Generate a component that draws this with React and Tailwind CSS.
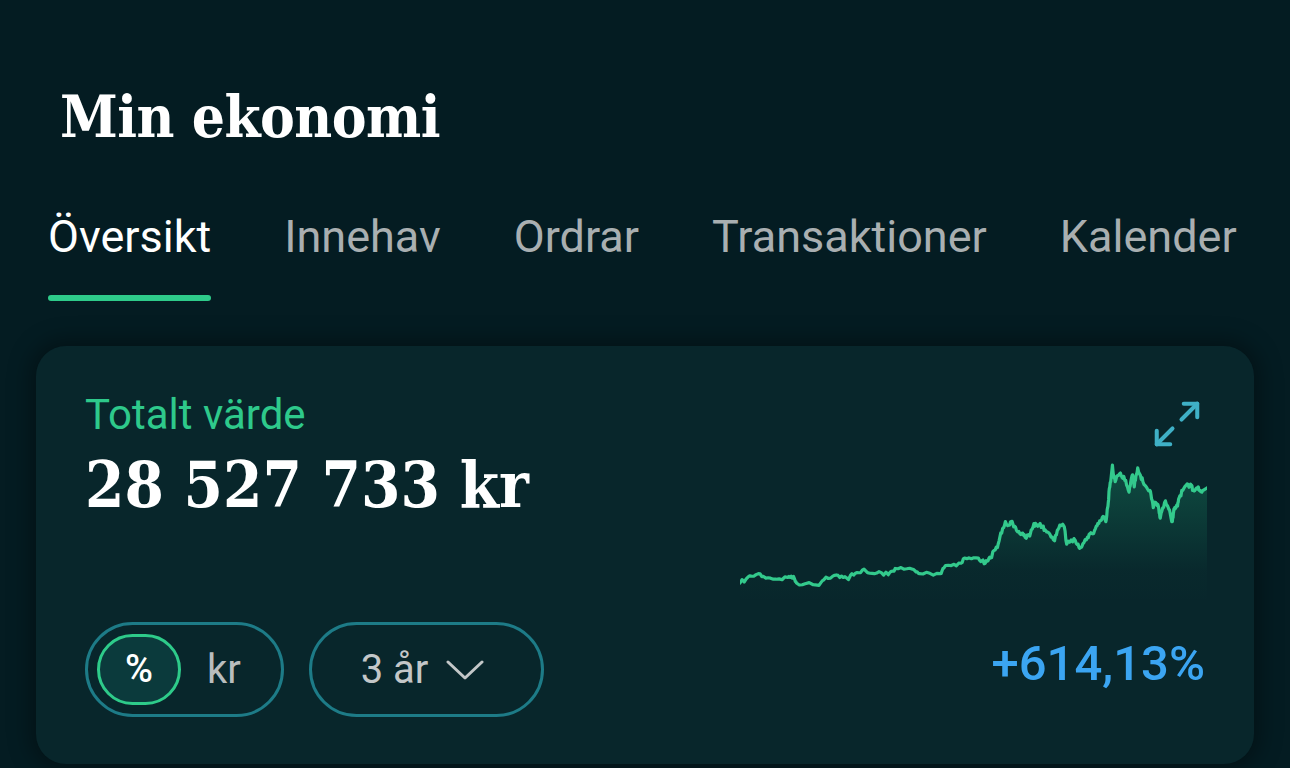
import React from "react";

const KEY = [
  [62, 572], [80, 560], [95, 552], [115, 545], [130, 553], [150, 558], [175, 560], [200, 556], [210, 552], [220, 562], [225, 572], [250, 574], [285, 578], [300, 565], [310, 555], [330, 552], [345, 550], [360, 556], [375, 562], [385, 545], [400, 542], [415, 535], [430, 542], [450, 545], [470, 542], [490, 548], [500, 538], [510, 530], [535, 532], [560, 532], [570, 540], [580, 545], [610, 544], [640, 545], [648, 530], [655, 522], [680, 518], [700, 515], [710, 500], [730, 502], [750, 500], [760, 508], [770, 515], [778, 508], [785, 500], [795, 478], [805, 470], [812, 440], [820, 415], [828, 395], [838, 405], [845, 395], [852, 410], [860, 420], [870, 430], [878, 428], [885, 440], [895, 435], [900, 430], [908, 410], [915, 400], [925, 405], [935, 408], [942, 418], [950, 425], [960, 440], [970, 450], [978, 420], [985, 405], [998, 410], [1005, 460], [1018, 448], [1030, 450], [1038, 460], [1045, 470], [1055, 455], [1065, 440], [1072, 430], [1080, 430], [1088, 415], [1095, 400], [1103, 392], [1110, 380], [1118, 395], [1122, 360], [1125, 340], [1128, 300], [1132, 280], [1137, 232], [1141, 265], [1145, 280], [1152, 262], [1160, 255], [1165, 268], [1170, 265], [1178, 290], [1185, 310], [1190, 280], [1195, 260], [1200, 295], [1205, 262], [1210, 240], [1218, 262], [1225, 280], [1235, 295], [1245, 305], [1250, 330], [1255, 355], [1262, 340], [1268, 345], [1272, 370], [1275, 385], [1282, 355], [1290, 335], [1295, 348], [1300, 360], [1305, 378], [1310, 395], [1313, 370], [1315, 360], [1320, 355], [1325, 350], [1328, 330], [1332, 320], [1340, 305], [1350, 290], [1358, 296], [1365, 290], [1370, 305], [1378, 300], [1385, 295], [1390, 305], [1395, 310], [1402, 303], [1410, 298]
];

function makePath() {
  let seed = 7;
  const rnd = () => {
    seed = (seed * 16807) % 2147483647;
    return seed / 2147483647;
  };
  const pts = [];
  for (let i = 0; i < KEY.length - 1; i++) {
    const [x0, y0] = KEY[i];
    const [x1, y1] = KEY[i + 1];
    const n = 3;
    for (let k = 0; k < n; k++) {
      const t = k / n;
      const jitter = k === 0 ? 0 : (rnd() - 0.5) * 12;
      pts.push([x0 + (x1 - x0) * t, y0 + (y1 - y0) * t + jitter]);
    }
  }
  pts.push(KEY[KEY.length - 1]);
  const line = pts.map((p, i) => `${i ? "L" : "M"}${p[0].toFixed(1)},${p[1].toFixed(1)}`).join(" ");
  const area = `${line} L1410,640 L62,640 Z`;
  return { line, area };
}

const { line, area } = makePath();

function Chart() {
  return (
    <svg width="467" height="136" viewBox="62 226 1348 392" preserveAspectRatio="none" className="block">
      <defs>
        <linearGradient id="g" x1="0" y1="0" x2="0" y2="1">
          <stop offset="0" stopColor="#1fa877" stopOpacity="0.3" />
          <stop offset="0.75" stopColor="#1fa877" stopOpacity="0.02" />
          <stop offset="1" stopColor="#1fa877" stopOpacity="0" />
        </linearGradient>
      </defs>
      <path d={area} fill="url(#g)" />
      <path d={line} fill="none" stroke="#33c98c" strokeWidth="3.2" strokeLinejoin="round" strokeLinecap="round" vectorEffect="non-scaling-stroke" />
    </svg>
  );
}

function ExpandIcon() {
  return (
    <svg width="54" height="54" viewBox="0 0 24 24" fill="none" stroke="#3fb0c6" strokeWidth="1.8" strokeLinecap="round" strokeLinejoin="round">
      <polyline points="15 3 21 3 21 9" />
      <polyline points="9 21 3 21 3 15" />
      <line x1="21" y1="3" x2="14" y2="10" />
      <line x1="3" y1="21" x2="10" y2="14" />
    </svg>
  );
}

const tabs = ["Översikt", "Innehav", "Ordrar", "Transaktioner", "Kalender"];

export default function App() {
  const roboto = { fontFamily: "Roboto, 'Noto Sans', sans-serif" };
  const slab = { fontFamily: "'DejaVu Serif Condensed', 'DejaVu Serif', serif", fontStretch: "condensed" };
  return (
    <div className="w-[1290px] h-[768px] overflow-hidden bg-[#041c22] flex flex-col" style={roboto}>
      <h1 className="pl-[60px] pt-[85px] text-[58px] leading-[64px] font-bold text-white tracking-[-0.5px]" style={slab}>
        Min ekonomi
      </h1>
      <div className="flex gap-[73px] pl-[48px] mt-[62px]">
        {tabs.map((t, i) => (
          <div key={t} className="flex flex-col">
            <span className={`text-[45px] leading-[52px] ${i === 0 ? "text-white" : "text-[#a9afb1]"}`}>{t}</span>
            <div className={`mt-[32px] h-[6px] rounded-full ${i === 0 ? "bg-[#2ecb8a]" : "bg-transparent"}`} />
          </div>
        ))}
      </div>
      <div className="mx-[36px] mt-[45px] h-[418px] rounded-[30px] bg-[#08262b] shadow-[0_0_22px_6px_rgba(0,0,0,0.35)] pl-[49px] pr-[47px] pt-[44px] pb-[47px] flex flex-col justify-between">
        <div className="flex justify-between">
          <div className="flex flex-col">
            <span className="text-[42px] leading-[50px] text-[#2ec98b]">Totalt värde</span>
            <span className="mt-[9px] text-[63px] leading-[72px] font-bold text-white" style={slab}>
              28 527 733 kr
            </span>
          </div>
          <div className="flex flex-col items-end mt-[7px]">
            <div className="mr-[3px]">
              <ExpandIcon />
            </div>
            <div className="mt-[12px]">
              <Chart />
            </div>
          </div>
        </div>
        <div className="flex items-end justify-between">
          <div className="flex gap-[25px]">
            <div className="w-[199px] h-[95px] rounded-full border-[3px] border-[#1d7b87] flex items-center pl-[9px]">
              <div className="w-[84px] h-[71px] rounded-full border-[3px] border-[#2ecb8a] bg-[#0b3a3c] flex items-center justify-center text-[38px] font-medium text-white">
                %
              </div>
              <span className="ml-[26px] text-[40px] text-[#b9bdbe]">kr</span>
            </div>
            <div className="w-[235px] h-[95px] rounded-full border-[3px] border-[#1d7b87] flex items-center justify-center gap-[18px] pr-[8px] text-[40px] text-[#c3c7c8]">
              <span>3 år</span>
              <svg width="38" height="22" viewBox="0 0 38 22" fill="none" stroke="#c3c7c8" strokeWidth="3" strokeLinecap="round" strokeLinejoin="round">
                <polyline points="2 3 19 19 36 3" />
              </svg>
            </div>
          </div>
          <span className="text-[49px] leading-[56px] font-medium text-[#3ba5f2] mb-[25px] mr-[2px]">+614,13%</span>
        </div>
      </div>
    </div>
  );
}
